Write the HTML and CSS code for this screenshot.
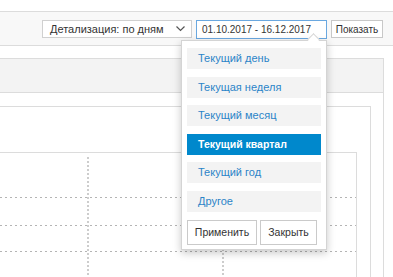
FILE: index.html
```html
<!DOCTYPE html>
<html lang="ru">
<head>
  <meta charset="UTF-8">
  <title>Отчёт</title>
  <link rel="stylesheet" href="styles.css">
</head>
<body>
  <div class="topline"></div>
  <div class="toolbar">
    <div class="select">
      <span>Детализация: по дням</span>
      <svg class="chevron" width="9" height="6" viewBox="0 0 9 6"><path d="M0.5 0.5 L4.5 4.5 L8.5 0.5" fill="none" stroke="#555" stroke-width="1.2"/></svg>
    </div>
    <div class="daterange">01.10.2017 - 16.12.2017</div>
    <button class="btn show">Показать</button>
  </div>
  <div class="content">
    <div class="panel">
      <div class="panel-head"></div>
      <div class="panel-body">
        <div class="box">
          <div class="chart">
            <svg width="400" height="130">
              <g stroke="#b4b4b4" stroke-width="1" stroke-dasharray="2 3">
                <line x1="0" y1="44.5" x2="400" y2="44.5"/>
                <line x1="0" y1="72.5" x2="400" y2="72.5"/>
                <line x1="0" y1="98.5" x2="400" y2="98.5"/>
              </g>
              <g stroke="#cdcdcd" stroke-width="2" stroke-dasharray="2 2">
                <line x1="98" y1="4" x2="98" y2="130"/>
                <line x1="233" y1="4" x2="233" y2="130"/>
              </g>
            </svg>
          </div>
        </div>
      </div>
    </div>
  </div>

  <div class="popup">
    <div class="caret"></div>
    <a class="range">Текущий день</a>
    <a class="range">Текущая неделя</a>
    <a class="range">Текущий месяц</a>
    <a class="range active">Текущий квартал</a>
    <a class="range">Текущий год</a>
    <a class="range">Другое</a>
    <div class="popup-buttons">
      <button class="btn">Применить</button>
      <button class="btn">Закрыть</button>
    </div>
  </div>
</body>
</html>
```

FILE: styles.css
```css
html {
  font-family: "Liberation Sans", Arial, sans-serif;
}
body {
  margin: 0;
  height: 277px;
  overflow: hidden;
  background: #fff;
  color: #333;
}
.topline {
  height: 11px;
  border-bottom: 1px solid #dcdcdc;
}
.toolbar {
  height: 34px;
  box-sizing: border-box;
  background: #f8f8f8;
  border-bottom: 1px solid #dcdcdc;
  display: flex;
  justify-content: flex-end;
  align-items: flex-start;
  padding: 8px 10px 0 0;
  gap: 4px;
}
.select {
  width: 150px;
  height: 18px;
  box-sizing: border-box;
  border: 1px solid #d0d0d0;
  background: #fff;
  font-size: 11px;
  padding: 0 6px 0 7px;
  display: flex;
  align-items: center;
  justify-content: space-between;
}
.daterange {
  width: 131px;
  height: 19px;
  box-sizing: border-box;
  border: 1px solid #6aa8e0;
  background: #fff;
  font-size: 10px;
  padding: 0 5px;
  line-height: 17px;
}
.btn {
  font-family: inherit;
  font-size: 10px;
  color: #333;
  background: #fff;
  border: 1px solid #c8c8c8;
  padding: 0;
  height: 18px;
  margin: 0;
}
.show {
  width: 52px;
}
.content {
  padding-top: 12px;
}
.panel {
  margin: 0 9px 0 -10px;
  border-top: 1px solid #dcdcdc;
  border-right: 1px solid #dcdcdc;
  height: 218px;
  overflow: hidden;
}
.panel-head {
  height: 33px;
  background: #f3f3f3;
  border-bottom: 1px solid #dcdcdc;
}
.panel-body {
  padding: 13px 12px 0 0;
}
.box {
  border-top: 1px solid #dcdcdc;
  border-right: 1px solid #dcdcdc;
  padding: 45px 13px 0 0;
  height: 170px;
}
.chart {
  border-top: 1px solid #dcdcdc;
  border-right: 1px solid #dcdcdc;
  height: 130px;
  overflow: hidden;
}
.chart svg {
  display: block;
}
.popup {
  position: absolute;
  left: 181px;
  top: 40px;
  width: 146px;
  height: 210px;
  box-sizing: border-box;
  background: #fff;
  border: 1px solid #d4d4d4;
  box-shadow: 0 3px 8px rgba(0, 0, 0, 0.22);
  padding: 7px 5px 0;
  display: flex;
  flex-direction: column;
  gap: 7.6px;
}
.caret {
  position: absolute;
  top: -6px;
  right: 8px;
  width: 8px;
  height: 8px;
  background: #fff;
  border-left: 1px solid #d4d4d4;
  border-top: 1px solid #d4d4d4;
  transform: rotate(45deg);
}
.range {
  display: block;
  height: 21px;
  line-height: 21px;
  background: #f3f3f3;
  color: #2b84c8;
  font-size: 11px;
  padding-left: 11px;
}
.range.active {
  background: #0088cc;
  color: #fff;
  font-weight: bold;
  font-size: 10.5px;
}
.popup-buttons {
  display: flex;
  gap: 3px;
}
.popup-buttons .btn {
  height: 25px;
  font-size: 10.5px;
  border-color: #cacaca;
}
.popup-buttons .btn:first-child {
  width: 70px;
}
.popup-buttons .btn:last-child {
  width: 57px;
}
```
